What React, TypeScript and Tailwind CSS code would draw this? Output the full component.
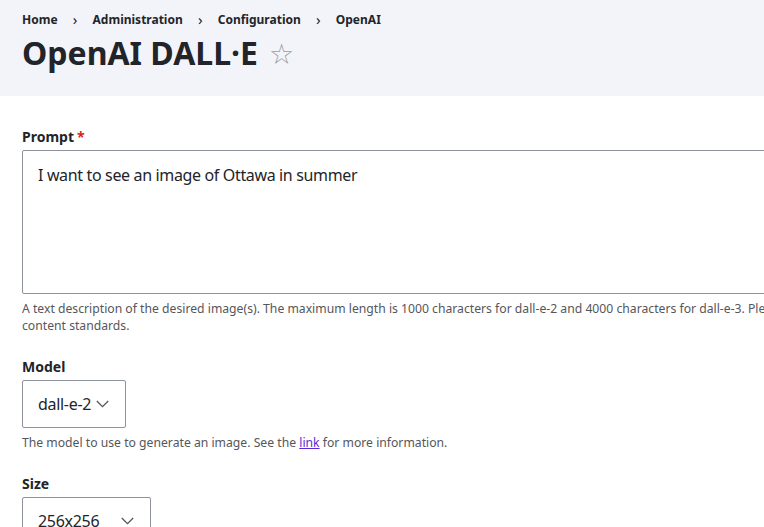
const font = { fontFamily: '"Noto Sans", "DejaVu Sans", sans-serif' };

const Chevron = () => (
    <svg width="13" height="8" viewBox="0 0 13 8" fill="none" className="shrink-0">
        <path d="M0.8 1l5.7 5.7 5.7-5.7" stroke="#55565b" strokeWidth="1.3" />
    </svg>
);

const Breadcrumb = () => {
    const items = ["Home", "Administration", "Configuration", "OpenAI"];
    return (
        <ol className="flex items-center text-[12px] font-bold text-[#232429] h-[39px]">
            {items.map((item, i) => (
                <li key={item} className="flex items-center">
                    {i > 0 && <span className="w-[35px] text-center font-normal text-[15px] leading-none">›</span>}
                    <span>{item}</span>
                </li>
            ))}
        </ol>
    );
};

const Field = (props: { label: string; required?: boolean; children: React.ReactNode; help?: React.ReactNode }) => {
    const { label, required, children, help } = props;
    return (
        <div className="mb-[22px]">
            <label className="flex items-center gap-[3px] text-[14px] font-bold text-[#232429] h-[20px] mb-[4px]">
                {label}
                {required && <span className="text-[#dc2323] font-bold">*</span>}
            </label>
            {children}
            {help && <div className="mt-[6px] text-[12.2px] leading-[17px] text-[#55565b] w-[900px]">{help}</div>}
        </div>
    );
};

const Select = (props: { value: string; gap: string }) => (
    <div className={`inline-flex h-[48px] border border-[#8e929c] rounded-[2px] items-center ${props.gap} pl-[15px] pr-[16px] text-[16px] tracking-[-0.3px] text-[#232429] whitespace-nowrap`}>
        <span>{props.value}</span>
        <Chevron />
    </div>
);

export default function App() {
    return (
        <div className="w-[764px] h-[527px] overflow-hidden bg-white" style={font}>
            <header className="bg-[#f3f4f9] h-[96px] pl-[22px]">
                <Breadcrumb />
                <div className="flex items-center gap-[11px] -mt-[4px]">
                    <h1 className="text-[32px] font-bold text-[#232429] leading-[36px]">OpenAI DALL·E</h1>
                    <span className="text-[28px] text-[#9d9d9f] leading-none">☆</span>
                </div>
            </header>
            <main className="pl-[22px] pt-[30px]">
                <Field
                    label="Prompt"
                    required
                    help={<>A text description of the desired image(s). The maximum length is 1000 characters for dall-e-2 and 4000 characters for dall-e-3. Please review the<br />content standards.</>}
                >
                    <div className="w-[900px] h-[144px] border border-[#8e929c] rounded-[2px] px-[15px] pt-[12px] text-[16px] tracking-[-0.35px] text-[#232429]">
                        I want to see an image of Ottawa in summer
                    </div>
                </Field>
                <Field
                    label="Model"
                    help={<>The model to use to generate an image. See the <a className="text-[#5b2bd8] underline" href="#">link</a> for more information.</>}
                >
                    <Select value="dall-e-2" gap="gap-[5px]" />
                </Field>
                <Field label="Size">
                    <Select value="256x256" gap="gap-[22px]" />
                </Field>
            </main>
        </div>
    );
}
